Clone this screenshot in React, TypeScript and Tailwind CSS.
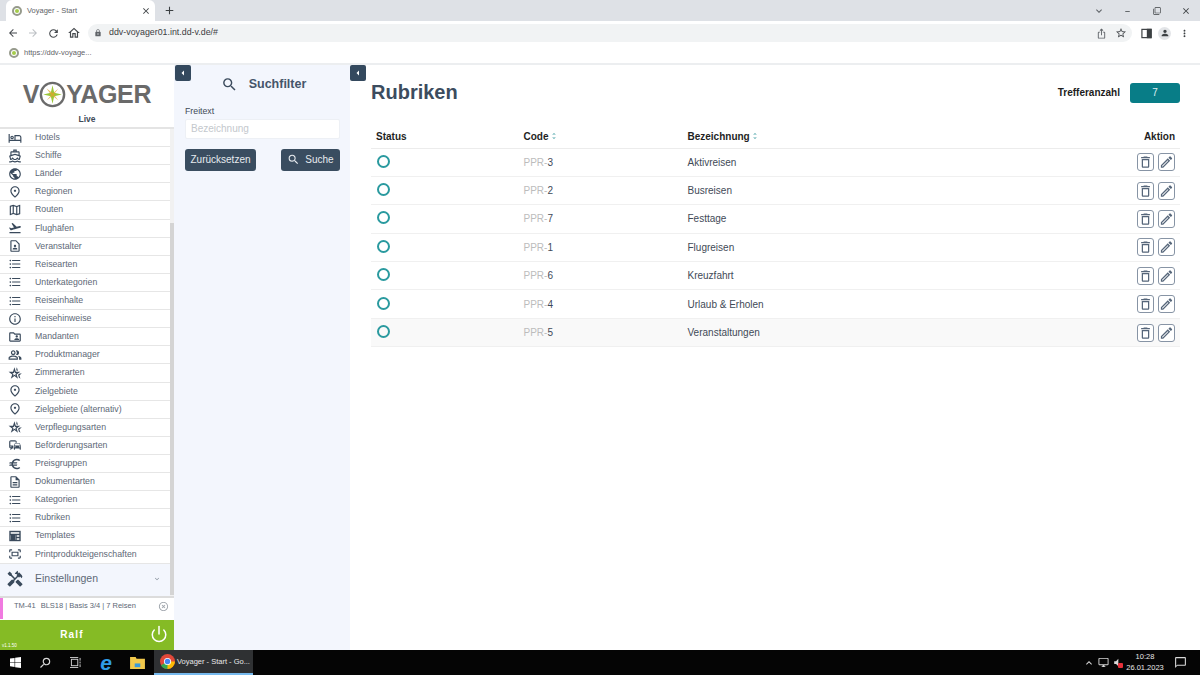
import React from "react";
import {
  MdOutlineHotel, MdOutlineDirectionsBoat, MdPublic, MdOutlinePlace, MdOutlineMap, MdFlightTakeoff,
  MdOutlineContactPage, MdFormatListBulleted, MdInfoOutline, MdOutlineFolderShared, MdOutlinePeopleAlt,
  MdOutlineHotelClass, MdOutlineCommute, MdEuro, MdOutlineDescription, MdOutlineFitScreen,
  MdHandyman, MdSearch, MdOutlineDelete, MdOutlineModeEdit, MdArrowBack, MdArrowForward, MdRefresh, MdOutlineHome, MdLock,
  MdAdd, MdClose, MdOutlineStarBorder, MdPerson, MdMoreVert, MdOutlineIosShare, MdKeyboardArrowDown, MdExpandMore,
  MdHighlightOff, MdArrowLeft, MdUnfoldMore, MdMinimize, MdFilterNone, MdKeyboardArrowUp, MdOutlineChatBubbleOutline, MdOutlineDesktopWindows, MdVolumeMute,
} from "react-icons/md";
import { Power } from "lucide-react";

function TemplateIcon({ className }: { className?: string }) {
  return (
    <svg viewBox="0 0 14 14" className={className} fill="none" stroke="currentColor" strokeWidth="1.4">
      <rect x="2" y="2.5" width="10" height="9" />
      <path d="M2 5.5h10M8 5.5v6M8 8.5h4" />
      <rect x="3" y="6" width="4" height="5" fill="currentColor" stroke="none" />
    </svg>
  );
}

function SidePanelIcon({ className }: { className?: string }) {
  return (
    <svg viewBox="0 0 12 12" className={className} fill="none" stroke="currentColor" strokeWidth="1.3">
      <rect x="1" y="1.5" width="10" height="9" />
      <rect x="7" y="1.5" width="4" height="9" fill="currentColor" />
    </svg>
  );
}

const menu: [React.ComponentType<{ className?: string }>, string][] = [
  [MdOutlineHotel, "Hotels"], [MdOutlineDirectionsBoat, "Schiffe"], [MdPublic, "Länder"], [MdOutlinePlace, "Regionen"],
  [MdOutlineMap, "Routen"], [MdFlightTakeoff, "Flughäfen"], [MdOutlineContactPage, "Veranstalter"],
  [MdFormatListBulleted, "Reisearten"], [MdFormatListBulleted, "Unterkategorien"], [MdFormatListBulleted, "Reiseinhalte"],
  [MdInfoOutline, "Reisehinweise"], [MdOutlineFolderShared, "Mandanten"], [MdOutlinePeopleAlt, "Produktmanager"],
  [MdOutlineHotelClass, "Zimmerarten"], [MdOutlinePlace, "Zielgebiete"], [MdOutlinePlace, "Zielgebiete (alternativ)"],
  [MdOutlineHotelClass, "Verpflegungsarten"], [MdOutlineCommute, "Beförderungsarten"], [MdEuro, "Preisgruppen"],
  [MdOutlineDescription, "Dokumentarten"], [MdFormatListBulleted, "Kategorien"], [MdFormatListBulleted, "Rubriken"],
  [TemplateIcon, "Templates"], [MdOutlineFitScreen, "Printprodukteigenschaften"],
];

const rows = [
  ["3", "Aktivreisen"], ["2", "Busreisen"], ["7", "Festtage"], ["1", "Flugreisen"],
  ["6", "Kreuzfahrt"], ["4", "Urlaub & Erholen"], ["5", "Veranstaltungen"],
];

function Favicon() {
  return (
    <span className="flex h-[10px] w-[10px] shrink-0 items-center justify-center rounded-full border-2 border-[#969a8c] bg-white">
      <span className="h-[4px] w-[4px] rounded-full bg-[#a4cc4a]" />
    </span>
  );
}

function Compass() {
  return (
    <svg viewBox="0 0 32 32" className="h-[27px] w-[27px] shrink-0">
      <circle cx="16" cy="16" r="13.8" fill="none" stroke="#6b6b6b" strokeWidth="2.8" />
      <path d="M16 5 L18 14 L27 16 L18 18 L16 27 L14 18 L5 16 L14 14 Z" fill="#9cc63a" />
      <path d="M9 9 L16.5 14.5 L23 9 L17.5 16 L23 23 L16 17.5 L9 23 L14.5 16.5 Z" fill="#e3a32a" opacity=".75" />
    </svg>
  );
}

function TitleBar() {
  return (
    <div className="flex h-[21px] shrink-0 items-end bg-[#dee1e6] pl-[6px] text-[#3c4043]">
      <div className="flex h-[21px] w-[149px] items-center rounded-t-[6px] bg-white pl-[6px] pr-[4px]">
        <Favicon />
        <span className="ml-[5px] flex-1 text-[7.5px] text-[#5f6368]">Voyager - Start</span>
        <MdClose className="h-[10px] w-[10px] text-[#3c4043]" />
      </div>
      <div className="flex h-[21px] w-[28px] items-center justify-center">
        <MdAdd className="h-[13px] w-[13px]" />
      </div>
      <div className="flex-1" />
      <div className="flex h-[21px] items-center">
        <MdKeyboardArrowDown className="mr-[8px] h-[12px] w-[12px] text-[#5f6368]" />
        <span className="flex w-[29px] justify-center"><MdMinimize className="mb-[5px] h-[9px] w-[9px]" /></span>
        <span className="flex w-[29px] justify-center"><MdFilterNone className="h-[8px] w-[8px]" /></span>
        <span className="flex w-[29px] justify-center"><MdClose className="h-[10px] w-[10px]" /></span>
      </div>
    </div>
  );
}

function Toolbar() {
  return (
    <div className="flex h-[22px] shrink-0 items-center bg-white pl-[7px] pt-[2px] text-[#5f6368]">
      <div className="flex w-[81px] items-center">
        <MdArrowBack className="mr-[8px] h-[12px] w-[12px] text-[#45494d]" />
        <MdArrowForward className="mr-[8px] h-[12px] w-[12px] text-[#bcc0c4]" />
        <MdRefresh className="mr-[7px] h-[13px] w-[13px] text-[#45494d]" />
        <MdOutlineHome className="h-[14px] w-[14px] text-[#45494d]" />
      </div>
      <div className="flex h-[18px] w-[1044px] items-center rounded-full bg-[#f1f3f4] pl-[6px] pr-[5px]">
        <MdLock className="h-[8px] w-[8px] text-[#5f6368]" />
        <span className="ml-[7px] flex-1 text-[8.85px] text-[#3c4043]">ddv-voyager01.int.dd-v.de/#</span>
        <MdOutlineIosShare className="mr-[8px] h-[11px] w-[11px]" />
        <MdOutlineStarBorder className="h-[12px] w-[12px] text-[#45494d]" />
      </div>
      <SidePanelIcon className="ml-[9px] h-[11px] w-[11px] text-[#3c4043]" />
      <span className="ml-[6px] flex h-[13px] w-[13px] items-center justify-center rounded-full bg-[#e3e5e8]">
        <MdPerson className="h-[10px] w-[10px] text-[#3c4043]" />
      </span>
      <MdMoreVert className="ml-[8px] h-[11px] w-[11px] text-[#3c4043]" />
    </div>
  );
}

function Bookmarks() {
  return (
    <div className="flex h-[22px] shrink-0 items-center border-b-2 border-[#eceef0] bg-white pl-[9px]">
      <Favicon />
      <span className="ml-[5px] text-[7.5px] text-[#5f6368]">https://ddv-voyage...</span>
    </div>
  );
}

function Sidebar() {
  return (
    <aside className="relative flex w-[174px] shrink-0 flex-col bg-white">
      <div className="flex h-[62px] shrink-0 flex-col items-center pt-[15px]">
        <div className="flex h-[29px] items-center text-[25px] font-bold leading-none tracking-[-0.3px] text-[#6a6a6a]">
          <span>V</span><Compass /><span>YAGER</span>
        </div>
        <span className="mt-[5px] text-[8.5px] font-bold leading-[10px] text-[#3f4a57]">Live</span>
      </div>
      <div className="flex min-h-0 flex-1 border-t-2 border-[#e4e4e4]">
        <div className="flex w-[170px] flex-col">
          {menu.map(([Icon, label], i) => (
            <div key={i} className="flex h-[18.12px] shrink-0 items-center border-b border-[#e6e6e6] bg-white">
              <span className="flex w-[30px] justify-center"><Icon className="h-[14px] w-[14px] text-[#3a4a5c]" /></span>
              <span className="ml-[5px] text-[8.75px] text-[#5d6876]">{label}</span>
            </div>
          ))}
          <div className="flex h-[32px] shrink-0 items-center bg-[#f3f6fd] pb-[1px]">
            <span className="flex w-[30px] justify-center"><MdHandyman className="h-[18px] w-[18px] text-[#3a4a5c]" /></span>
            <span className="ml-[5px] flex-1 text-[10.5px] text-[#5d6876]">Einstellungen</span>
            <MdExpandMore className="mr-[9px] h-[8px] w-[8px] text-[#7a8591]" />
          </div>
        </div>
        <div className="w-[4px] bg-[#f1f1f1] pt-[94px]">
          <div className="h-[372px] bg-[#d4d4d4]" />
        </div>
      </div>
      <div className="flex h-[24px] shrink-0 items-start border-t-2 border-[#dcdcdc] bg-white">
        <span className="h-[21px] w-[3px] bg-[#f07ae0]" />
        <span className="ml-[11px] mt-[2px] text-[7.5px] text-[#5d6876]">TM-41</span>
        <span className="ml-[5px] mt-[2px] flex-1 text-[7.5px] text-[#5d6876]">BLS18 | Basis 3/4 | 7 Reisen</span>
        <MdHighlightOff className="mr-[5px] mt-[3px] h-[11px] w-[11px] text-[#a0a6ad]" />
      </div>
      <div className="relative flex h-[30px] shrink-0 items-center justify-center bg-[#85bb25] pb-[1px] pr-[30px]">
        <span className="text-[10px] font-bold tracking-[1.2px] text-white">Ralf</span>
        <Power className="absolute right-[6px] top-[5px] h-[18px] w-[18px] text-white" strokeWidth={2} />
        <span className="absolute bottom-[2px] left-[2px] text-[4.5px] leading-none text-white">v1.1.50</span>
      </div>
    </aside>
  );
}

function Toggle({ className }: { className: string }) {
  return (
    <div className={`absolute top-0 flex h-[16px] w-[16px] items-center justify-center rounded-[2px] bg-[#34495e] ${className}`}>
      <MdArrowLeft className="h-[12px] w-[12px] text-white" />
    </div>
  );
}

function Filter() {
  return (
    <section className="relative w-[176px] shrink-0 bg-[#f3f6fd] pl-[11px] pr-[10px]">
      <Toggle className="left-[1px]" />
      <div className="flex h-[38px] items-center justify-center pl-[2px] pt-[1px]">
        <MdSearch className="h-[17px] w-[17px] text-[#3a4a5c]" />
        <span className="ml-[11px] text-[12.5px] font-bold text-[#45556a]">Suchfilter</span>
      </div>
      <div className="mt-[2px] text-[8.75px] leading-[12px] text-[#3f4a57]">Freitext</div>
      <div className="mt-[2px] flex h-[20px] items-center rounded-[2px] border border-[#edf0f5] bg-white px-[5px] pb-[1px] text-[10px] text-[#c4c8cd]">Bezeichnung</div>
      <div className="mt-[10px] flex items-center justify-between">
        <button className="flex h-[22px] w-[71px] items-center justify-center rounded-[3px] bg-[#3a4d60] pb-[1px] text-[10px] text-[#e7ebef]">Zurücksetzen</button>
        <button className="flex h-[22px] w-[59px] items-center justify-center rounded-[3px] bg-[#3a4d60] pb-[1px] text-[10px] text-[#e7ebef]">
          <MdSearch className="mr-[5px] h-[13px] w-[13px]" />Suche
        </button>
      </div>
    </section>
  );
}

function Main() {
  return (
    <main className="relative flex-1 bg-white pl-[21px] pr-[20px]">
      <Toggle className="left-0" />
      <div className="flex h-[55px] items-center justify-between">
        <h1 className="mb-[2px] text-[20px] font-bold text-[#3c4c5e]">Rubriken</h1>
        <div className="flex items-center">
          <span className="mr-[10px] text-[10px] font-bold text-[#1c1c1c]">Trefferanzahl</span>
          <span className="flex h-[20px] w-[50px] items-center justify-center rounded-[3px] bg-[#087d87] text-[10px] text-[#dff0f1]">7</span>
        </div>
      </div>
      <div className="grid h-[28.5px] grid-cols-[147.5px_164px_1fr_60px] items-center border-b border-[#ececec] px-[5px] pt-[5px] text-[10px] font-bold text-[#1f1f1f]">
        <span>Status</span>
        <span className="flex items-center">Code<MdUnfoldMore className="ml-[1px] h-[8px] w-[8px] text-[#4aa3a8]" /></span>
        <span className="flex items-center">Bezeichnung<MdUnfoldMore className="ml-[1px] h-[8px] w-[8px] text-[#4aa3a8]" /></span>
        <span className="text-right">Aktion</span>
      </div>
      {rows.map(([code, name], i) => (
        <div
          key={code}
          className={`grid h-[28.4px] grid-cols-[147.5px_164px_1fr_60px] items-center border-b border-[#f0f0f0] px-[5px] text-[10px] text-[#3f4a57] ${i === 6 ? "bg-[#f9f9f9]" : "bg-white"}`}
        >
          <span className="mb-[2px] ml-[1px] h-[13px] w-[13px] rounded-full border-2 border-[#2a9a9f]" />
          <span><span className="text-[#bcbcbc]">PPR-</span>{code}</span>
          <span>{name}</span>
          <span className="flex justify-end gap-[4px]">
            <span className="flex h-[18px] w-[17px] items-center justify-center rounded-[3px] border border-[#8794a5] bg-white">
              <MdOutlineDelete className="h-[16px] w-[16px] text-[#56667a]" />
            </span>
            <span className="flex h-[18px] w-[17px] items-center justify-center rounded-[3px] border border-[#8794a5] bg-white">
              <MdOutlineModeEdit className="h-[16px] w-[16px] text-[#56667a]" />
            </span>
          </span>
        </div>
      ))}
    </main>
  );
}

function WinIcon() {
  return (
    <svg viewBox="0 0 12 12" className="h-[11px] w-[11px]">
      <path d="M0 1.7 5 1v4.6H0zM5.6.9 12 0v5.6H5.6zM0 6.2h5v4.7l-5-.7zM5.6 6.2H12V12l-6.4-.9z" fill="#fff" />
    </svg>
  );
}

function Taskbar() {
  return (
    <div className="flex h-[25px] shrink-0 items-center bg-[#050505] text-white">
      <span className="flex w-[30px] justify-center"><WinIcon /></span>
      <span className="flex w-[30px] justify-center"><MdSearch className="h-[14px] w-[14px] -scale-x-100 text-[#d8d8d8]" /></span>
      <span className="flex w-[30px] justify-center">
        <svg viewBox="0 0 14 12" className="h-[11px] w-[13px]" fill="none" stroke="#d8d8d8"><rect x="2.5" y="2.5" width="7" height="7" /><path d="M1 .5h9M1 11.5h9M12 1v3M12 5v2M12 8v3" /></svg>
      </span>
      <span className="flex w-[32px] justify-center text-[21px] font-bold italic leading-none text-[#2f9be6]">e</span>
      <span className="flex w-[30px] justify-center">
        <svg viewBox="0 0 16 14" className="h-[13px] w-[15px]"><path d="M0 1h6l1 2h9v11H0z" fill="#f2c94c" /><rect x="5" y="8" width="6" height="4" fill="#3a9ad9" /></svg>
      </span>
      <div className="ml-[2px] flex h-full w-[99px] items-center border-b-2 border-[#76b9ed] bg-[#2f3133] pl-[6px]">
        <svg viewBox="0 0 16 16" className="h-[15px] w-[15px] shrink-0">
          <circle cx="8" cy="8" r="8" fill="#e0483a" />
          <path d="M8 8 1 12a8 8 0 0 0 7 4l4-8z" fill="#36a852" />
          <path d="M8 8h8a8 8 0 0 1-8 8z" fill="#fbbc05" />
          <circle cx="8" cy="8" r="3.8" fill="#fff" /><circle cx="8" cy="8" r="2.9" fill="#4285f4" />
        </svg>
        <span className="ml-[2px] whitespace-nowrap text-[7.5px] text-[#e8e8e8]">Voyager - Start - Go...</span>
      </div>
      <div className="flex-1" />
      <MdKeyboardArrowUp className="mr-[3px] h-[12px] w-[12px] text-[#d8d8d8]" />
      <MdOutlineDesktopWindows className="mr-[2px] h-[11px] w-[11px] text-[#d8d8d8]" />
      <span className="relative flex w-[12px] items-center">
        <MdVolumeMute className="h-[11px] w-[11px] text-[#d8d8d8]" />
        <span className="absolute bottom-0 right-0 h-[5px] w-[5px] rounded-[1px] bg-[#e5303a]" />
      </span>
      <div className="mb-[1px] flex w-[44px] flex-col items-center text-[7.5px] leading-[11px] text-[#e8e8e8]">
        <span>10:28</span>
        <span>26.01.2023</span>
      </div>
      <span className="flex w-[26px] justify-center">
        <MdOutlineChatBubbleOutline className="h-[13px] w-[13px] text-[#d8d8d8]" />
      </span>
      <span className="w-[7px]" />
    </div>
  );
}

export default function App() {
  return (
    <div className="flex h-[675px] w-[1200px] flex-col overflow-hidden bg-white font-['Liberation_Sans',Arial,sans-serif]">
      <TitleBar />
      <Toolbar />
      <Bookmarks />
      <div className="flex min-h-0 flex-1">
        <Sidebar />
        <Filter />
        <Main />
      </div>
      <Taskbar />
    </div>
  );
}
